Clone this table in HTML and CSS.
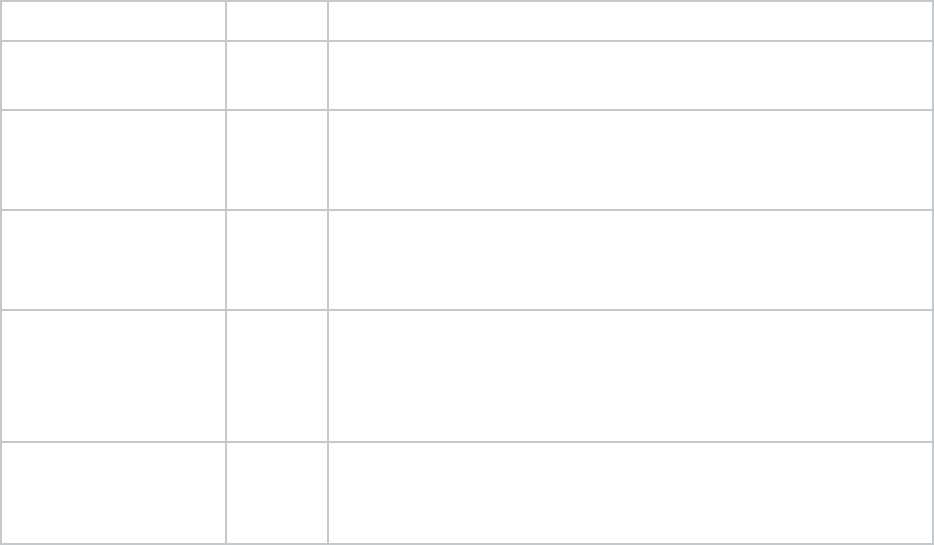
FILE: index.html
```html
<!DOCTYPE html>
<html lang="en">
<head>
<meta charset="utf-8">
<title>Table</title>
<link rel="stylesheet" href="styles.css">
</head>
<body>
<div class="grid" role="table">
  <div class="cell r1" role="cell"></div><div class="cell r1" role="cell"></div><div class="cell r1" role="cell"></div>
  <div class="cell" role="cell"></div><div class="cell" role="cell"></div><div class="cell" role="cell"></div>
  <div class="cell" role="cell"></div><div class="cell" role="cell"></div><div class="cell" role="cell"></div>
  <div class="cell" role="cell"></div><div class="cell" role="cell"></div><div class="cell" role="cell"></div>
  <div class="cell" role="cell"></div><div class="cell" role="cell"></div><div class="cell" role="cell"></div>
  <div class="cell" role="cell"></div><div class="cell" role="cell"></div><div class="cell" role="cell"></div>
</div>
</body>
</html>
```
FILE: styles.css
```css
html, body {
  margin: 0;
  padding: 0;
  background: #ffffff;
  font-family: "Liberation Sans", Arial, sans-serif;
}
.grid {
  box-sizing: border-box;
  width: 934px;
  height: 545px;
  display: grid;
  grid-template-columns: 225px 102px 605px;
  grid-template-rows: 40px 69px 100px 100px 132px 102px;
  border-left: 2px solid #c5c9ce;
  border-top: 2px solid #c5c9ce;
}
.cell {
  box-sizing: border-box;
  border-right: 2px solid #c5c9ce;
  border-bottom: 2px solid #c5c9ce;
}
```
